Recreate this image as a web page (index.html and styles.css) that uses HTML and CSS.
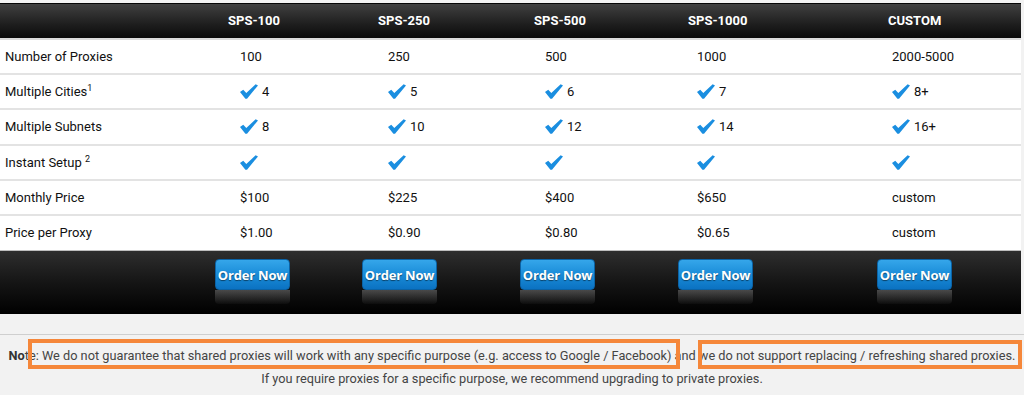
FILE: index.html
```html
<!DOCTYPE html>
<html>
<head>
<meta charset="utf-8">
<link rel="stylesheet" href="styles.css">
</head>
<body>
<div class="page">
  <div class="pricing">
    <div class="row head">
      <div class="cell label"></div>
      <div class="cell c1">SPS-100</div>
      <div class="cell c2">SPS-250</div>
      <div class="cell c3">SPS-500</div>
      <div class="cell c4">SPS-1000</div>
      <div class="cell c5">CUSTOM</div>
    </div>
    <div class="row">
      <div class="cell label">Number of Proxies</div>
      <div class="cell c1">100</div>
      <div class="cell c2">250</div>
      <div class="cell c3">500</div>
      <div class="cell c4">1000</div>
      <div class="cell c5">2000-5000</div>
    </div>
    <div class="row">
      <div class="cell label">Multiple Cities<sup>1</sup></div>
      <div class="cell c1"><svg class="chk" viewBox="0 0 20 16"><path d="M0 8.6 L3.6 6 L7 9.6 L17.4 0 L20 1.2 L7.8 16 L6 16 Z"/></svg>4</div>
      <div class="cell c2"><svg class="chk" viewBox="0 0 20 16"><path d="M0 8.6 L3.6 6 L7 9.6 L17.4 0 L20 1.2 L7.8 16 L6 16 Z"/></svg>5</div>
      <div class="cell c3"><svg class="chk" viewBox="0 0 20 16"><path d="M0 8.6 L3.6 6 L7 9.6 L17.4 0 L20 1.2 L7.8 16 L6 16 Z"/></svg>6</div>
      <div class="cell c4"><svg class="chk" viewBox="0 0 20 16"><path d="M0 8.6 L3.6 6 L7 9.6 L17.4 0 L20 1.2 L7.8 16 L6 16 Z"/></svg>7</div>
      <div class="cell c5"><svg class="chk" viewBox="0 0 20 16"><path d="M0 8.6 L3.6 6 L7 9.6 L17.4 0 L20 1.2 L7.8 16 L6 16 Z"/></svg>8+</div>
    </div>
    <div class="row">
      <div class="cell label">Multiple Subnets</div>
      <div class="cell c1"><svg class="chk" viewBox="0 0 20 16"><path d="M0 8.6 L3.6 6 L7 9.6 L17.4 0 L20 1.2 L7.8 16 L6 16 Z"/></svg>8</div>
      <div class="cell c2"><svg class="chk" viewBox="0 0 20 16"><path d="M0 8.6 L3.6 6 L7 9.6 L17.4 0 L20 1.2 L7.8 16 L6 16 Z"/></svg>10</div>
      <div class="cell c3"><svg class="chk" viewBox="0 0 20 16"><path d="M0 8.6 L3.6 6 L7 9.6 L17.4 0 L20 1.2 L7.8 16 L6 16 Z"/></svg>12</div>
      <div class="cell c4"><svg class="chk" viewBox="0 0 20 16"><path d="M0 8.6 L3.6 6 L7 9.6 L17.4 0 L20 1.2 L7.8 16 L6 16 Z"/></svg>14</div>
      <div class="cell c5"><svg class="chk" viewBox="0 0 20 16"><path d="M0 8.6 L3.6 6 L7 9.6 L17.4 0 L20 1.2 L7.8 16 L6 16 Z"/></svg>16+</div>
    </div>
    <div class="row">
      <div class="cell label">Instant Setup <sup>2</sup></div>
      <div class="cell c1"><svg class="chk" viewBox="0 0 20 16"><path d="M0 8.6 L3.6 6 L7 9.6 L17.4 0 L20 1.2 L7.8 16 L6 16 Z"/></svg></div>
      <div class="cell c2"><svg class="chk" viewBox="0 0 20 16"><path d="M0 8.6 L3.6 6 L7 9.6 L17.4 0 L20 1.2 L7.8 16 L6 16 Z"/></svg></div>
      <div class="cell c3"><svg class="chk" viewBox="0 0 20 16"><path d="M0 8.6 L3.6 6 L7 9.6 L17.4 0 L20 1.2 L7.8 16 L6 16 Z"/></svg></div>
      <div class="cell c4"><svg class="chk" viewBox="0 0 20 16"><path d="M0 8.6 L3.6 6 L7 9.6 L17.4 0 L20 1.2 L7.8 16 L6 16 Z"/></svg></div>
      <div class="cell c5"><svg class="chk" viewBox="0 0 20 16"><path d="M0 8.6 L3.6 6 L7 9.6 L17.4 0 L20 1.2 L7.8 16 L6 16 Z"/></svg></div>
    </div>
    <div class="row">
      <div class="cell label">Monthly Price</div>
      <div class="cell c1">$100</div>
      <div class="cell c2">$225</div>
      <div class="cell c3">$400</div>
      <div class="cell c4">$650</div>
      <div class="cell c5">custom</div>
    </div>
    <div class="row last">
      <div class="cell label">Price per Proxy</div>
      <div class="cell c1">$1.00</div>
      <div class="cell c2">$0.90</div>
      <div class="cell c3">$0.80</div>
      <div class="cell c4">$0.65</div>
      <div class="cell c5">custom</div>
    </div>
    <div class="row foot">
      <div class="cell label"></div>
      <div class="cell c1"><div class="order"><a class="btn">Order Now</a><span class="reflect"></span></div></div>
      <div class="cell c2"><div class="order"><a class="btn">Order Now</a><span class="reflect"></span></div></div>
      <div class="cell c3"><div class="order"><a class="btn">Order Now</a><span class="reflect"></span></div></div>
      <div class="cell c4"><div class="order"><a class="btn">Order Now</a><span class="reflect"></span></div></div>
      <div class="cell c5"><div class="order"><a class="btn">Order Now</a><span class="reflect"></span></div></div>
    </div>
  </div>
  <div class="note">
    <p><b>No</b>te: We do not guarantee that shared proxies will work with any specific purpose (e.g. access to Google / Facebook) and we do not support replacing / refreshing shared proxies.</p>
    <p>If you require proxies for a specific purpose, we recommend upgrading to private proxies.</p>
  </div>
  <div class="mark mark-a"></div>
  <div class="mark mark-b"></div>
</div>
</body>
</html>
```

FILE: styles.css
```css
html, body {
  margin: 0;
  padding: 0;
}
body {
  background: #f2f2f2;
  font-family: Roboto, "Liberation Sans", Arial, sans-serif;
  font-size: 13px;
  color: #111;
}
.page {
  position: relative;
  width: 1024px;
  height: 395px;
  overflow: hidden;
  padding-top: 3px;
  box-sizing: border-box;
}
.pricing {
  width: 1021px;
  background: #fff;
}
.row {
  display: grid;
  grid-template-columns: 215px 147px 158px 158px 199px 1fr;
  height: 33.2px;
  border-bottom: 2px solid #e3e3e3;
}
.row.last {
  border-bottom: none;
  height: 34.2px;
}
.cell {
  display: block;
  line-height: 33px;
  padding-left: var(--v);
  white-space: nowrap;
}
.row .label { padding-left: 5px; }
.c1 { --h: 13px; --v: 25px; }
.c2 { --h: 16px; --v: 26px; }
.c3 { --h: 14px; --v: 25px; }
.c4 { --h: 10px; --v: 19px; }
.c5 { --h: 11px; --v: 15px; }
sup {
  font-size: 9px;
  line-height: 0;
  vertical-align: 5px;
}
.head {
  height: 34px;
  border-top: 1px solid #050505;
  border-bottom: 2px solid #dcdcdc;
  background: linear-gradient(#404040, #1e1e1e 60%, #0b0b0b);
  color: #fff;
  font-weight: bold;
}
.head .cell { padding-left: var(--h); line-height: 34px; }
.chk {
  width: 18px;
  height: 15px;
  margin-right: 4px;
  vertical-align: -3px;
  fill: #1a8ee0;
}
.foot {
  height: 63px;
  border-bottom: none;
  border-top: 1px solid #bdbdbd;
  background: linear-gradient(#2e2e2e, #151515 50%, #000);
}
.foot .cell { padding-left: 0; padding-top: 8px; line-height: normal; }
.order {
  display: flex;
  flex-direction: column;
  width: 75px;
}
.btn {
  display: flex;
  align-items: center;
  justify-content: center;
  height: 31px;
  box-sizing: border-box;
  border: 1px solid #0b63a6;
  border-radius: 4px;
  background: linear-gradient(#35a6ea, #1a8cd8 50%, #0b72c2);
  color: #fff;
  font-family: "Open Sans", sans-serif;
  font-weight: bold;
  font-size: 13px;
  letter-spacing: -0.2px;
  text-shadow: 0 1px 1px rgba(0,0,0,0.5);
  cursor: pointer;
}
.reflect {
  height: 14px;
  border-radius: 0 0 4px 4px;
  background: linear-gradient(rgba(120,120,120,0.55), rgba(60,60,60,0.12));
}
.note {
  margin-top: 20px;
  border-top: 1px solid #cfcfcf;
  padding-top: 9px;
  text-align: center;
  color: #444;
  font-size: 12.75px;
}
.note p {
  margin: 0;
  line-height: 23px;
  white-space: nowrap;
}
.note b { font-weight: bold; color: #333; }
.mark {
  position: absolute;
  border: 4px solid #f5873a;
  box-sizing: border-box;
}
.mark-a { left: 28px; top: 339px; width: 652px; height: 30px; }
.mark-b { left: 698px; top: 340px; width: 324px; height: 29px; }
```
